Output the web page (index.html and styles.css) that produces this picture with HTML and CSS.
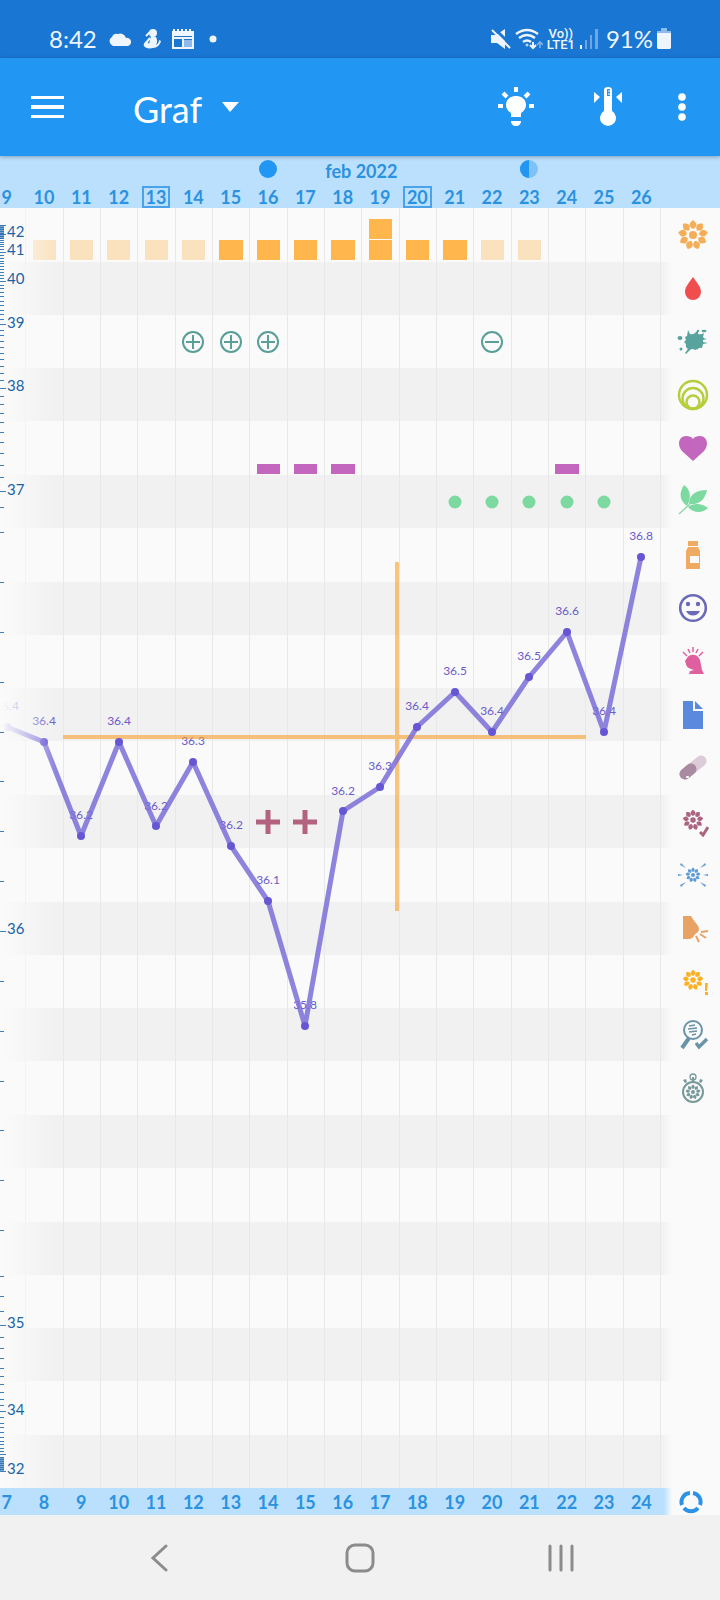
FILE: index.html
```
<!DOCTYPE html>
<html lang="sk">
<head>
    <meta charset="utf-8">
    <meta name="viewport" content="width=device-width, initial-scale=1">
    <title>Graf</title>
    <link rel="stylesheet" href="styles.css">
</head>
<body>
    <svg class="defs" aria-hidden="true">
        <symbol id="flower" viewBox="-16 -16 32 32">
            <circle r="4"/>
            <path id="petal" d="M0-15C4-12 5-9 0-6C-5-9-4-12 0-15z"/>
            <use href="#petal" transform="rotate(40)"/>
            <use href="#petal" transform="rotate(80)"/>
            <use href="#petal" transform="rotate(120)"/>
            <use href="#petal" transform="rotate(160)"/>
            <use href="#petal" transform="rotate(200)"/>
            <use href="#petal" transform="rotate(240)"/>
            <use href="#petal" transform="rotate(280)"/>
            <use href="#petal" transform="rotate(320)"/>
        </symbol>
    </svg>

    <div class="status-bar">
        <span class="clock">8:42</span>
        <svg width="24" height="16" viewBox="0 0 24 16" fill="#eef5fd"><path d="M5 15a5 5 0 0 1-1-9 5 5 0 0 1 6-3 6 6 0 0 1 8 4 4 4 0 0 1 2 8z"/></svg>
        <svg width="18" height="22" viewBox="0 0 18 22" fill="#eef5fd"><circle cx="10" cy="5" r="4"/><path d="M8 8l5 1c2 4 1 6 0 8 2-1 3-3 3-5l2 1c-1 4-4 7-8 7-4 1-8 0-9-2s1-4 3-5l2 3 1-4z"/><path d="M3 8l5-5M2 16l5-6" stroke="#eef5fd" stroke-width="2" fill="none"/></svg>
        <svg width="22" height="20" viewBox="0 0 22 20" fill="#eef5fd"><path fill-rule="evenodd" d="M0 2h22v18H0zM2 7v1h18V7zm0 3v8h8v-8zm10 0v1h8v-1z"/><path d="M1 0h2v2H1zM5 0h2v2H5zM9 0h2v2H9zM13 0h2v2h-2zM17 0h2v2h-2z"/><path d="M12 11h8v7h-8z" fill="#8dbaea"/></svg>
        <svg class="more-dot" width="8" height="8" viewBox="0 0 8 8" fill="#eef5fd"><circle cx="4" cy="4" r="3.5"/></svg>

        <div class="status-right">
            <svg width="20" height="22" viewBox="0 0 20 22" fill="#eef5fd"><path d="M0 7h5l9-6v20l-8-6H0z"/><path d="M3 0l17 17" stroke="#1976d2" stroke-width="3"/><path d="M1 2l18 18" stroke="#eef5fd" stroke-width="2"/></svg>
            <svg width="28" height="22" viewBox="0 0 28 22" fill="none" stroke="#eef5fd" stroke-width="2.4"><path d="M1 6Q12-2 23 6M4 10Q12 4 20 10M8 14Q12 11 16 14"/><circle cx="12" cy="17" r="1" stroke-width="1"/><path d="M18 14v6M15 17l3 3 3-3" stroke-width="2"/><path d="M25 20v-6M22 17l3-3 3 3" stroke="#7fb0e8" stroke-width="1.6"/></svg>
            <span class="volte">Vo))<br>LTE1</span>
            <svg width="19" height="22" viewBox="0 0 19 22" fill="#6ea6e2"><path d="M1 17h2v4H1z" fill="#eef5fd"/><path d="M6 12h2v9H6zM11 7h2v14h-2zM16 1h3v20h-3z"/></svg>
            <span class="battery-text">91%</span>
            <svg width="14" height="22" viewBox="0 0 14 22" fill="#eef5fd"><path d="M4 0h6v3H4z" fill="#8dbaea"/><path d="M0 3h14v2H0z" fill="#8dbaea"/><path d="M0 5h14v15l-1 1H1l-1-1z"/></svg>
        </div>
    </div>

    <header class="app-bar">
        <button class="icon-button menu-button" aria-label="Menu">
            <svg width="34" height="24" viewBox="0 0 34 24" fill="#fff"><path d="M0 1h33v3H0zM0 10h33v4H0zM0 20h33v3H0z"/></svg>
        </button>
        <label class="view-picker">
            <select class="view-select" aria-label="Zobrazenie">
                <option>Graf</option>
            </select>
            <svg width="17" height="10" viewBox="0 0 17 10" fill="#fff"><path d="M0 0h17L8 10z"/></svg>
        </label>
        <button class="icon-button action-button" aria-label="Tipy">
            <svg width="36" height="40" viewBox="-18 -20 36 40" fill="#fff">
                <path d="M0-11a9 9 0 0 1 5 17v4H-5V6A9 9 0 0 1 0-11zM-5 14H5c0 3-2 5-5 5s-5-2-5-5z"/>
                <path d="M0-20v5M-18-1h5M13-1h5M-13-14l4 4M13-14l-4 4" stroke="#fff" stroke-width="4"/>
            </svg>
        </button>
        <button class="icon-button action-button" aria-label="Teplota">
            <svg width="28" height="40" viewBox="-14 -20 28 40" fill="#fff">
                <path fill-rule="evenodd" d="M-4-17a4 3 0 0 1 8 0V4a8 8 0 1 1-8 0zM-1-18v7h3v-7z"/>
                <path d="M0-16h2M0-13h2" stroke="#fff"/>
                <path d="M-14-15l6 5-6 6zM14-15l-6 5 6 6z"/>
            </svg>
        </button>
        <button class="icon-button more-button" aria-label="Viac">
            <svg width="8" height="30" viewBox="0 0 8 30" fill="#fff"><circle cx="4" cy="5" r="3.8"/><circle cx="4" cy="15" r="3.8"/><circle cx="4" cy="25" r="3.8"/></svg>
        </button>
    </header>

    <main class="chart">
        <div class="date-strip date-strip-top">
            <div class="days">
                <svg class="moon-full" width="18" height="18" viewBox="0 0 18 18"><circle cx="9" cy="9" r="9" fill="#2196f3"/></svg>
                <span class="month">feb 2022</span>
                <svg class="moon-half" width="18" height="18" viewBox="0 0 18 18"><circle cx="9" cy="9" r="9" fill="#7fc1fa"/><path d="M9 0a9 9 0 0 0 0 18z" fill="#2196f3"/></svg>
                <span class="day">9</span>
                <span class="day">10</span>
                <span class="day">11</span>
                <span class="day">12</span>
                <span class="day day-marked">13</span>
                <span class="day">14</span>
                <span class="day">15</span>
                <span class="day">16</span>
                <span class="day">17</span>
                <span class="day">18</span>
                <span class="day">19</span>
                <span class="day day-marked">20</span>
                <span class="day">21</span>
                <span class="day">22</span>
                <span class="day">23</span>
                <span class="day">24</span>
                <span class="day">25</span>
                <span class="day">26</span>
            </div>
        </div>

        <div class="chart-body">
            <svg class="plot" viewBox="0 0 672 1280" role="img" aria-label="Teploty">
                <defs>
                    <linearGradient id="fade-left">
                        <stop offset="0.04" stop-color="#fafafa"/>
                        <stop offset="1" stop-color="#fafafa" stop-opacity="0"/>
                    </linearGradient>
                    <linearGradient id="fade-right">
                        <stop offset="0" stop-color="#fafafa" stop-opacity="0"/>
                        <stop offset="1" stop-color="#fafafa"/>
                    </linearGradient>
                </defs>

                <!-- row bands and day lines -->
                <path class="bands" d="M0 54h672v53H0zM0 160h672v53H0zM0 267h672v53H0zM0 374h672v53H0zM0 480h672v53H0zM0 587h672v53H0zM0 694h672v53H0zM0 800h672v53H0zM0 907h672v53H0zM0 1014h672v53H0zM0 1120h672v53H0zM0 1227h672v53H0z"/>
                <path class="day-lines" d="M25 0v1280M63 0v1280M100 0v1280M137 0v1280M175 0v1280M212 0v1280M249 0v1280M287 0v1280M324 0v1280M361 0v1280M399 0v1280M436 0v1280M473 0v1280M511 0v1280M548 0v1280M585 0v1280M623 0v1280M660 0v1280"/>

                <!-- fertility -->
                <path class="fertile-low" d="M33 32h23v20H33zM70 32h23v20H70zM107 32h23v20H107zM145 32h23v20H145zM182 32h23v20H182zM481 32h23v20H481zM518 32h23v20H518z"/>
                <path class="fertile" d="M219 32h24v20H219zM257 32h23v20H257zM294 32h23v20H294zM331 32h24v20H331zM369 32h23v20H369zM369 11h23v20H369zM406 32h23v20H406zM443 32h24v20H443z"/>

                <!-- tests -->
                <g class="test">
                    <circle cx="193" cy="134" r="10"/><path d="M186 134h14M193 127v14"/>
                    <circle cx="231" cy="134" r="10"/><path d="M224 134h14M231 127v14"/>
                    <circle cx="268" cy="134" r="10"/><path d="M261 134h14M268 127v14"/>
                    <circle cx="492" cy="134" r="10"/><path d="M485 134h14"/>
                </g>

                <path class="love" d="M257 256h23v10H257zM294 256h23v10H294zM331 256h24v10H331zM555 256h24v10H555z"/>
                <g class="herb">
                    <circle cx="455" cy="294" r="6.5"/>
                    <circle cx="492" cy="294" r="6.5"/>
                    <circle cx="529" cy="294" r="6.5"/>
                    <circle cx="567" cy="294" r="6.5"/>
                    <circle cx="604" cy="294" r="6.5"/>
                </g>
                <path class="ovulation" d="M256 614h24M268 602v24M293 614h24M305 602v24"/>

                <g class="value">
                    <text x="7" y="502">36.4</text>
                    <text x="44" y="517">36.4</text>
                    <text x="81" y="611">36.2</text>
                    <text x="119" y="517">36.4</text>
                    <text x="156" y="602">36.2</text>
                    <text x="193" y="537">36.3</text>
                    <text x="231" y="621">36.2</text>
                    <text x="268" y="676">36.1</text>
                    <text x="305" y="801">35.8</text>
                    <text x="343" y="587">36.2</text>
                    <text x="380" y="562">36.3</text>
                    <text x="417" y="502">36.4</text>
                    <text x="455" y="467">36.5</text>
                    <text x="492" y="507">36.4</text>
                    <text x="529" y="452">36.5</text>
                    <text x="567" y="407">36.6</text>
                    <text x="604" y="507">36.4</text>
                    <text x="641" y="332">36.8</text>
                </g>

                <path class="cover-line" d="M63 529H586M397 354V703"/>

                <polyline class="series" points="7,519 44,534 81,628 119,534 156,618 193,554 231,638 268,693 305,818 343,603 380,579 417,519 455,484 492,524 529,469 567,424 604,524 641,349"/>
                <g class="point">
                    <circle cx="7" cy="519" r="4"/>
                    <circle cx="44" cy="534" r="4"/>
                    <circle cx="81" cy="628" r="4"/>
                    <circle cx="119" cy="534" r="4"/>
                    <circle cx="156" cy="618" r="4"/>
                    <circle cx="193" cy="554" r="4"/>
                    <circle cx="231" cy="638" r="4"/>
                    <circle cx="268" cy="693" r="4"/>
                    <circle cx="305" cy="818" r="4"/>
                    <circle cx="343" cy="603" r="4"/>
                    <circle cx="380" cy="579" r="4"/>
                    <circle cx="417" cy="519" r="4"/>
                    <circle cx="455" cy="484" r="4"/>
                    <circle cx="492" cy="524" r="4"/>
                    <circle cx="529" cy="469" r="4"/>
                    <circle cx="567" cy="424" r="4"/>
                    <circle cx="604" cy="524" r="4"/>
                    <circle cx="641" cy="349" r="4"/>
                </g>

                <rect width="56" height="1280" fill="url(#fade-left)"/>
                <rect x="662" width="10" height="1280" fill="url(#fade-right)"/>

                <!-- temperature scale -->
                <path class="ticks" d="M0 17h6M0 26h6M0 44h6M0 73h6M0 116h6M0 180h6M0 283h6M0 723h6M0 1117h6M0 1203h6M0 1246h6M0 1263h6"/>
                <path class="ticks" d="M0 19h4M0 21h4M0 23h4M0 25h4M0 28h4M0 30h4M0 32h4M0 34h4M0 36h4M0 38h4M0 41h4M0 47h4M0 50h4M0 53h4M0 55h4M0 58h4M0 61h4M0 64h4M0 67h4M0 70h4M0 77h4M0 80h4M0 84h4M0 88h4M0 93h4M0 97h4M0 102h4M0 106h4M0 111h4M0 122h4M0 127h4M0 133h4M0 139h4M0 145h4M0 151h4M0 158h4M0 165h4M0 172h4M0 188h4M0 196h4M0 205h4M0 214h4M0 224h4M0 234h4M0 245h4M0 257h4M0 269h4M0 299h4M0 324h4M0 374h4M0 424h4M0 474h4M0 524h4M0 573h4M0 623h4M0 673h4M0 773h4M0 823h4M0 873h4M0 922h4M0 972h4M0 1022h4M0 1068h4M0 1088h4M0 1103h4M0 1129h4M0 1140h4M0 1150h4M0 1160h4M0 1168h4M0 1176h4M0 1184h4M0 1191h4M0 1197h4M0 1209h4M0 1215h4M0 1219h4M0 1224h4M0 1229h4M0 1233h4M0 1236h4M0 1240h4M0 1243h4M0 1249h4M0 1251h4M0 1253h4M0 1255h4M0 1257h4M0 1259h4M0 1261h4"/>
                <path class="ticks-dense" d="M0 17h4v14H0zM0 1249h4v14H0z"/>
                <g class="scale">
                    <text x="7" y="29">42</text>
                    <text x="7" y="47">41</text>
                    <text x="7" y="76">40</text>
                    <text x="7" y="120">39</text>
                    <text x="7" y="183">38</text>
                    <text x="7" y="287">37</text>
                    <text x="7" y="726">36</text>
                    <text x="7" y="1120">35</text>
                    <text x="7" y="1207">34</text>
                    <text x="7" y="1266">32</text>
                </g>
            </svg>

            <div class="legend">
                <svg class="legend-icon" viewBox="-16 -16 32 32" fill="#f5ae57"><use href="#flower" x="-16" y="-16" width="32" height="32"/></svg>
                <svg class="legend-icon" viewBox="-16 -16 32 32" fill="#f04e4e"><path d="M0-11C3-6 8-2 8 4A8 8 0 0 1-8 4C-8-2-3-6 0-11z"/></svg>
                <svg class="legend-icon" viewBox="-16 -16 32 32" fill="#58a39e"><path d="M-5-11l2 4q3 1 5-1l3-3 0 4q3 1 6-1l-1 4q1 2 4 2l-4 1v2l5 1-5 1-1 4q-3-1-4 1l-3 1q-3-2-5 0l-4 4-1-1 3-4q-3-2-2-5l-2-2 2-2-1-3 2-1z"/><ellipse cx="-13" cy="-3" rx="2.5" ry="2"/><ellipse cx="11" cy="-10" rx="2.5" ry="1.3"/><circle cx="-12" cy="8" r="1.5"/><circle cx="5" cy="-10" r="1.2"/></svg>
                <svg class="legend-icon" viewBox="-16 -16 32 32" fill="none" stroke="#b7cd3c" stroke-width="2.4"><circle r="14"/><circle cy="3.5" r="10.5"/><circle cy="7" r="6.5"/></svg>
                <svg class="legend-icon" viewBox="-16 -16 32 32" fill="#c267bd"><path d="M0 13L-10 4C-17-3-14-12-7-12C-4-12-1-11 0-9C1-11 4-12 7-12C14-12 17-3 10 4z"/></svg>
                <svg class="legend-icon" viewBox="-16 -16 32 32" fill="#7cd9a0"><path d="M-6 5C-14-1-14-8-9-16C-3-12-1-4-6 5z"/><path d="M-4 3C-4-7 4-11 14-11C12-1 6 4-4 3z"/><path d="M-5 6C2 1 9 3 15 7C9 13 0 12-5 6z"/><path d="M-14 13L-3 3" stroke="#7cd9a0" stroke-width="1.2"/></svg>
                <svg class="legend-icon" viewBox="-16 -16 32 32" fill="#f0ab62"><path d="M-5-14H5v5H-5z"/><path fill-rule="evenodd" d="M-5-8H5l2 4v18H-7V-4zM-3 1v7H6V1z"/></svg>
                <svg class="legend-icon" viewBox="-16 -16 32 32" fill="#6b6ab8"><circle r="12.8" fill="none" stroke="#6b6ab8" stroke-width="2.6"/><circle cx="-5" cy="-4" r="2.2"/><circle cx="5" cy="-4" r="2.2"/><path d="M-7 3H7C4 9-4 9-7 3z"/></svg>
                <svg class="legend-icon" viewBox="-16 -16 32 32" fill="#df609f"><path d="M-6-3C-3-8 5-7 7-1L9 9l2 4H-4l1-3 4-1C-3 8-7 6-7 3L-8 0z"/><path d="M-10-9l4 4M-5-12l2 4M0-14v5M5-12l-2 4M10-9l-4 4" stroke="#df609f" stroke-width="1.5"/></svg>
                <svg class="legend-icon" viewBox="-16 -16 32 32" fill="#5b89dd"><path d="M-10-14H0v10h10v18h-20z"/><path d="M2-14l8 8H2z"/></svg>
                <svg class="legend-icon" viewBox="-16 -16 32 32" stroke-linecap="round" stroke-width="11"><path d="M-8 6L8-7" stroke="#dccbd8"/><path d="M-8 6L-2 1" stroke="#a98ba1"/><path d="M-6 9h1" stroke="#fff" stroke-width="2"/></svg>
                <svg class="legend-icon" viewBox="-16 -16 32 32" fill="#ac6480"><use href="#flower" x="-11" y="-12" width="22" height="22"/><path d="M7 11l3 3 5-8" fill="none" stroke="#ac6480" stroke-width="3"/></svg>
                <svg class="legend-icon" viewBox="-16 -16 32 32" fill="#5f9bd6"><use href="#flower" x="-8" y="-8" width="16" height="16"/><path d="M-15-1l5 1-5 1zM15-1l-5 1 5 1zM-12-12l5 5-6-3zM12-12l-5 5 6-3zM-12 12l5-5-6 3zM12 12l-5-5 6 3z"/></svg>
                <svg class="legend-icon" viewBox="-16 -16 32 32" fill="#e8a263"><path d="M-10-12h8C1-6 6-3 6 1 6 5 2 5 1 8 -1 12-6 11-10 11z"/><path d="M8 4l7-1M7 6l6 4M3 8l3 6" stroke="#e8a263" stroke-width="2"/></svg>
                <svg class="legend-icon" viewBox="-16 -16 32 32" fill="#fbb124"><use href="#flower" x="-11" y="-12" width="22" height="22"/><path d="M12 2h3l-1 8h-2zM12 11h3v3h-3z"/></svg>
                <svg class="legend-icon" viewBox="-16 -16 32 32" fill="none" stroke="#6b93a8" stroke-width="2"><circle cx="0" cy="-5" r="9"/><path d="M-4 3l-7 10" stroke-width="4"/><path d="M-4-9l6-1M-5-6l9-1M-4-3l8-1M-1 0l4-1" stroke-width="1.4"/><path d="M3 8l3 4 8-8" stroke-width="3.4"/></svg>
                <svg class="legend-icon" viewBox="-16 -16 32 32" fill="#78999a"><circle cy="4" r="10" fill="none" stroke="#78999a" stroke-width="2"/><circle cy="-11" r="3" fill="none" stroke="#78999a" stroke-width="1.3"/><path d="M-1-11h2v5h-2zM-10-8l3-1 1 3-2 1zM10-8L7-9 6-6l2 1z"/><use href="#flower" x="-8" y="-4" width="16" height="16"/></svg>
            </div>
        </div>

        <div class="date-strip date-strip-bottom">
            <div class="days">
                <span class="day">7</span>
                <span class="day">8</span>
                <span class="day">9</span>
                <span class="day">10</span>
                <span class="day">11</span>
                <span class="day">12</span>
                <span class="day">13</span>
                <span class="day">14</span>
                <span class="day">15</span>
                <span class="day">16</span>
                <span class="day">17</span>
                <span class="day">18</span>
                <span class="day">19</span>
                <span class="day">20</span>
                <span class="day">21</span>
                <span class="day">22</span>
                <span class="day">23</span>
                <span class="day">24</span>
            </div>
            <button class="icon-button cycle-button" aria-label="Cyklus">
                <svg width="24" height="24" viewBox="-12 -12 24 24" fill="none" stroke="#2b92e8" stroke-width="4"><path d="M2-9A9 9 0 0 1 9 3M7 6A9 9 0 0 1-7 6M-9 3A9 9 0 0 1-1-9"/></svg>
            </button>
        </div>
    </main>

    <nav class="system-nav">
        <button class="icon-button nav-button" aria-label="Späť">
            <svg width="18" height="28" viewBox="0 0 18 28"><path d="M16 2L3 14l13 12"/></svg>
        </button>
        <button class="icon-button nav-button" aria-label="Domov">
            <svg width="30" height="30" viewBox="0 0 30 30"><rect x="2" y="2" width="26" height="26" rx="8"/></svg>
        </button>
        <button class="icon-button nav-button" aria-label="Nedávne">
            <svg width="26" height="28" viewBox="0 0 26 28"><path d="M2 2v24M13 2v24M24 2v24"/></svg>
        </button>
    </nav>
</body>
</html>
```

FILE: styles.css
```
* {
    box-sizing: border-box;
}

body {
    margin: 0;
    min-height: 100vh;
    display: flex;
    flex-direction: column;
    background-color: #fafafa;
    font-family: Lato, "Open Sans", sans-serif;
}

svg {
    display: block;
    flex-shrink: 0;
}

.defs {
    position: absolute;
    width: 0;
    height: 0;
}

.icon-button {
    display: flex;
    align-items: center;
    justify-content: center;
    padding: 0;
    border: none;
    background: none;
    cursor: pointer;
}

/* status bar */
.status-bar {
    display: flex;
    align-items: center;
    gap: 11px;
    height: 58px;
    padding: 20px 49px 0 49px;
    background-color: #1976d2;
    color: #eef5fd;
}

.clock {
    font-size: 24px;
    line-height: 24px;
}

.more-dot {
    margin-left: 4px;
}

.status-right {
    display: flex;
    align-items: center;
    gap: 4px;
    margin-left: auto;
}

.volte {
    font-family: Roboto, sans-serif;
    font-size: 13px;
    font-weight: 500;
    line-height: 11px;
    text-align: center;
}

.battery-text {
    margin-left: 4px;
    font-size: 24px;
    line-height: 24px;
}

/* app bar */
.app-bar {
    position: relative;
    display: flex;
    align-items: stretch;
    height: 98px;
    padding: 0 10px 0 16px;
    background-color: #2196f3;
    box-shadow: 0 1px 4px rgba(0, 0, 0, 0.3);
}

.menu-button {
    width: 64px;
}

.view-picker {
    display: flex;
    align-items: center;
    gap: 19px;
    margin-left: 53px;
    margin-right: auto;
}

.view-select {
    appearance: none;
    padding: 4px 0 0;
    border: none;
    background: none;
    color: #fff;
    font-family: inherit;
    font-size: 36px;
    line-height: 48px;
}

.action-button {
    width: 92px;
}

.more-button {
    width: 56px;
}

/* day numbers */
.date-strip {
    display: flex;
    overflow: hidden;
    background-color: #bbe0fe;
    color: #2b92e0;
    font-size: 18px;
    font-weight: bold;
}

.days {
    flex: 1;
    display: grid;
    grid-template-columns: repeat(18, 1fr);
    align-items: center;
    justify-items: center;
    margin-left: -12px;
}

.date-strip-top {
    height: 52px;
    padding-right: 60px;
}

.date-strip-top .days {
    grid-template-rows: 26px 26px;
}

.moon-full {
    grid-area: 1 / 8;
}

.month {
    grid-area: 1 / 9 / 2 / 13;
    padding-top: 4px;
}

.moon-half {
    grid-area: 1 / 15;
}

.day {
    line-height: 22px;
}

.date-strip-top .day {
    grid-row: 2;
    align-self: end;
}

.day-marked {
    padding: 0 2px;
    border: 2px solid #4aa3ea;
    line-height: 18px;
}

.date-strip-top .day-marked {
    line-height: 18px;
}

.date-strip-bottom {
    height: 27px;
    background: linear-gradient(to left, #fafafa 48px, #bbe0fe 56px);
}

.cycle-button {
    width: 60px;
    padding-left: 2px;
}

/* plot */
.chart-body {
    display: flex;
}

.plot {
    flex: 1;
    min-width: 0;
}

.bands {
    fill: #f1f1f1;
}

.day-lines {
    stroke: #e8e8e8;
    shape-rendering: crispEdges;
}

.fertile {
    fill: #ffb74d;
}

.fertile-low {
    fill: #fbe2bf;
}

.test {
    fill: none;
    stroke: #5a9e98;
    stroke-width: 2;
}

.love {
    fill: #c267bd;
}

.herb {
    fill: #7cd9a0;
}

.ovulation {
    stroke: #b3637f;
    stroke-width: 5;
}

.value {
    fill: #6a5acd;
    font-size: 12px;
    text-anchor: middle;
}

.cover-line {
    stroke: #f7a02c;
    stroke-opacity: 0.6;
    stroke-width: 4;
}

.series {
    fill: none;
    stroke: #7a6ed8;
    stroke-opacity: 0.85;
    stroke-width: 5;
    stroke-linejoin: round;
}

.point {
    fill: #6656d4;
}

.ticks {
    stroke: #3f7fb8;
    shape-rendering: crispEdges;
}

.ticks-dense {
    fill: #2a6cb0;
    fill-opacity: 0.6;
}

.scale {
    fill: #1a63a5;
    font-size: 15px;
}

.legend {
    display: grid;
    grid-template-rows: repeat(24, 1fr);
    align-items: center;
    justify-items: center;
    width: 48px;
    padding-right: 7px;
}

.legend-icon {
    width: 32px;
    height: 32px;
}

/* system navigation */
.system-nav {
    flex: 1;
    display: flex;
    min-height: 85px;
    padding: 0 58px;
    background-color: #f1f1f1;
}

.nav-button {
    flex: 1;
    fill: none;
    stroke: #8c8c8c;
    stroke-width: 3;
    stroke-linecap: round;
}
```
